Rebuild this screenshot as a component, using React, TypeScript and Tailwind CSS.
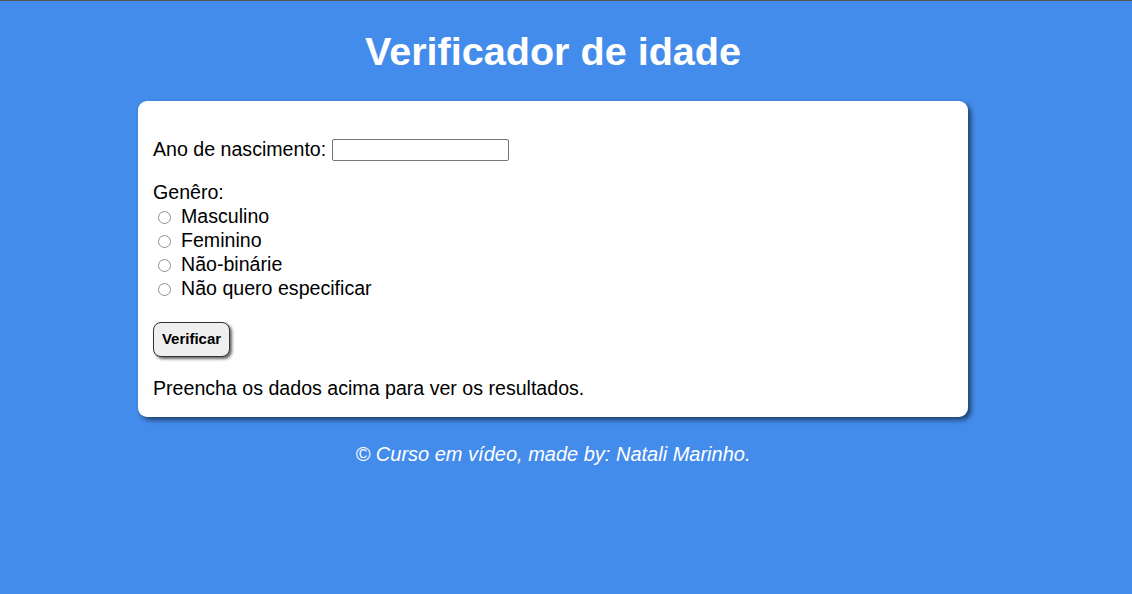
import React from "react";

const options = ["Masculino", "Feminino", "Não-binárie", "Não quero especificar"];

export default function App() {
  return (
    <div
      className="min-h-[594px] w-full bg-[#448ceb] border-t border-[#555555] text-black"
      style={{ fontFamily: '"Liberation Sans", Arial, sans-serif' }}
    >
      <div className="w-[1106px] flex flex-col items-center">
        <h1 className="mt-[27px] h-[46px] leading-[46px] text-[39.6px] font-bold text-white">
          Verificador de idade
        </h1>
        <section className="mt-[27px] w-[830px] bg-white rounded-[9px] shadow-[3px_3px_5px_rgba(0,0,0,0.55)] px-[15px] pt-[37px] pb-[16px] text-[19.6px]">
          <div className="h-[24px] flex items-center">
            <label>Ano de nascimento:</label>
            <input
              type="text"
              className="ml-[6px] w-[177px] h-[22px] border border-[#767676] rounded-[2px] bg-white outline-none"
            />
          </div>
          <div className="mt-[19px] h-[24px] flex items-center">Genêro:</div>
          <div className="flex flex-col">
            {options.map((o) => (
              <div key={o} className="h-[24px] flex items-center">
                <span className="ml-[5px] w-[13px] h-[13px] rounded-full border border-[#8f8f8f] bg-white" />
                <span className="ml-[10px]">{o}</span>
              </div>
            ))}
          </div>
          <div className="mt-[21px]">
            <button className="w-[77px] h-[35px] rounded-[8px] border border-[#333333] bg-[#efefef] text-[15px] font-bold shadow-[2px_2px_3px_rgba(0,0,0,0.6)]">
              Verificar
            </button>
          </div>
          <p className="mt-[20px] h-[24px] flex items-center">
            Preencha os dados acima para ver os resultados.
          </p>
        </section>
        <p className="mt-[26px] text-[20px] italic text-white leading-[23px]">
          © Curso em vídeo, made by: Natali Marinho.
        </p>
      </div>
    </div>
  );
}
